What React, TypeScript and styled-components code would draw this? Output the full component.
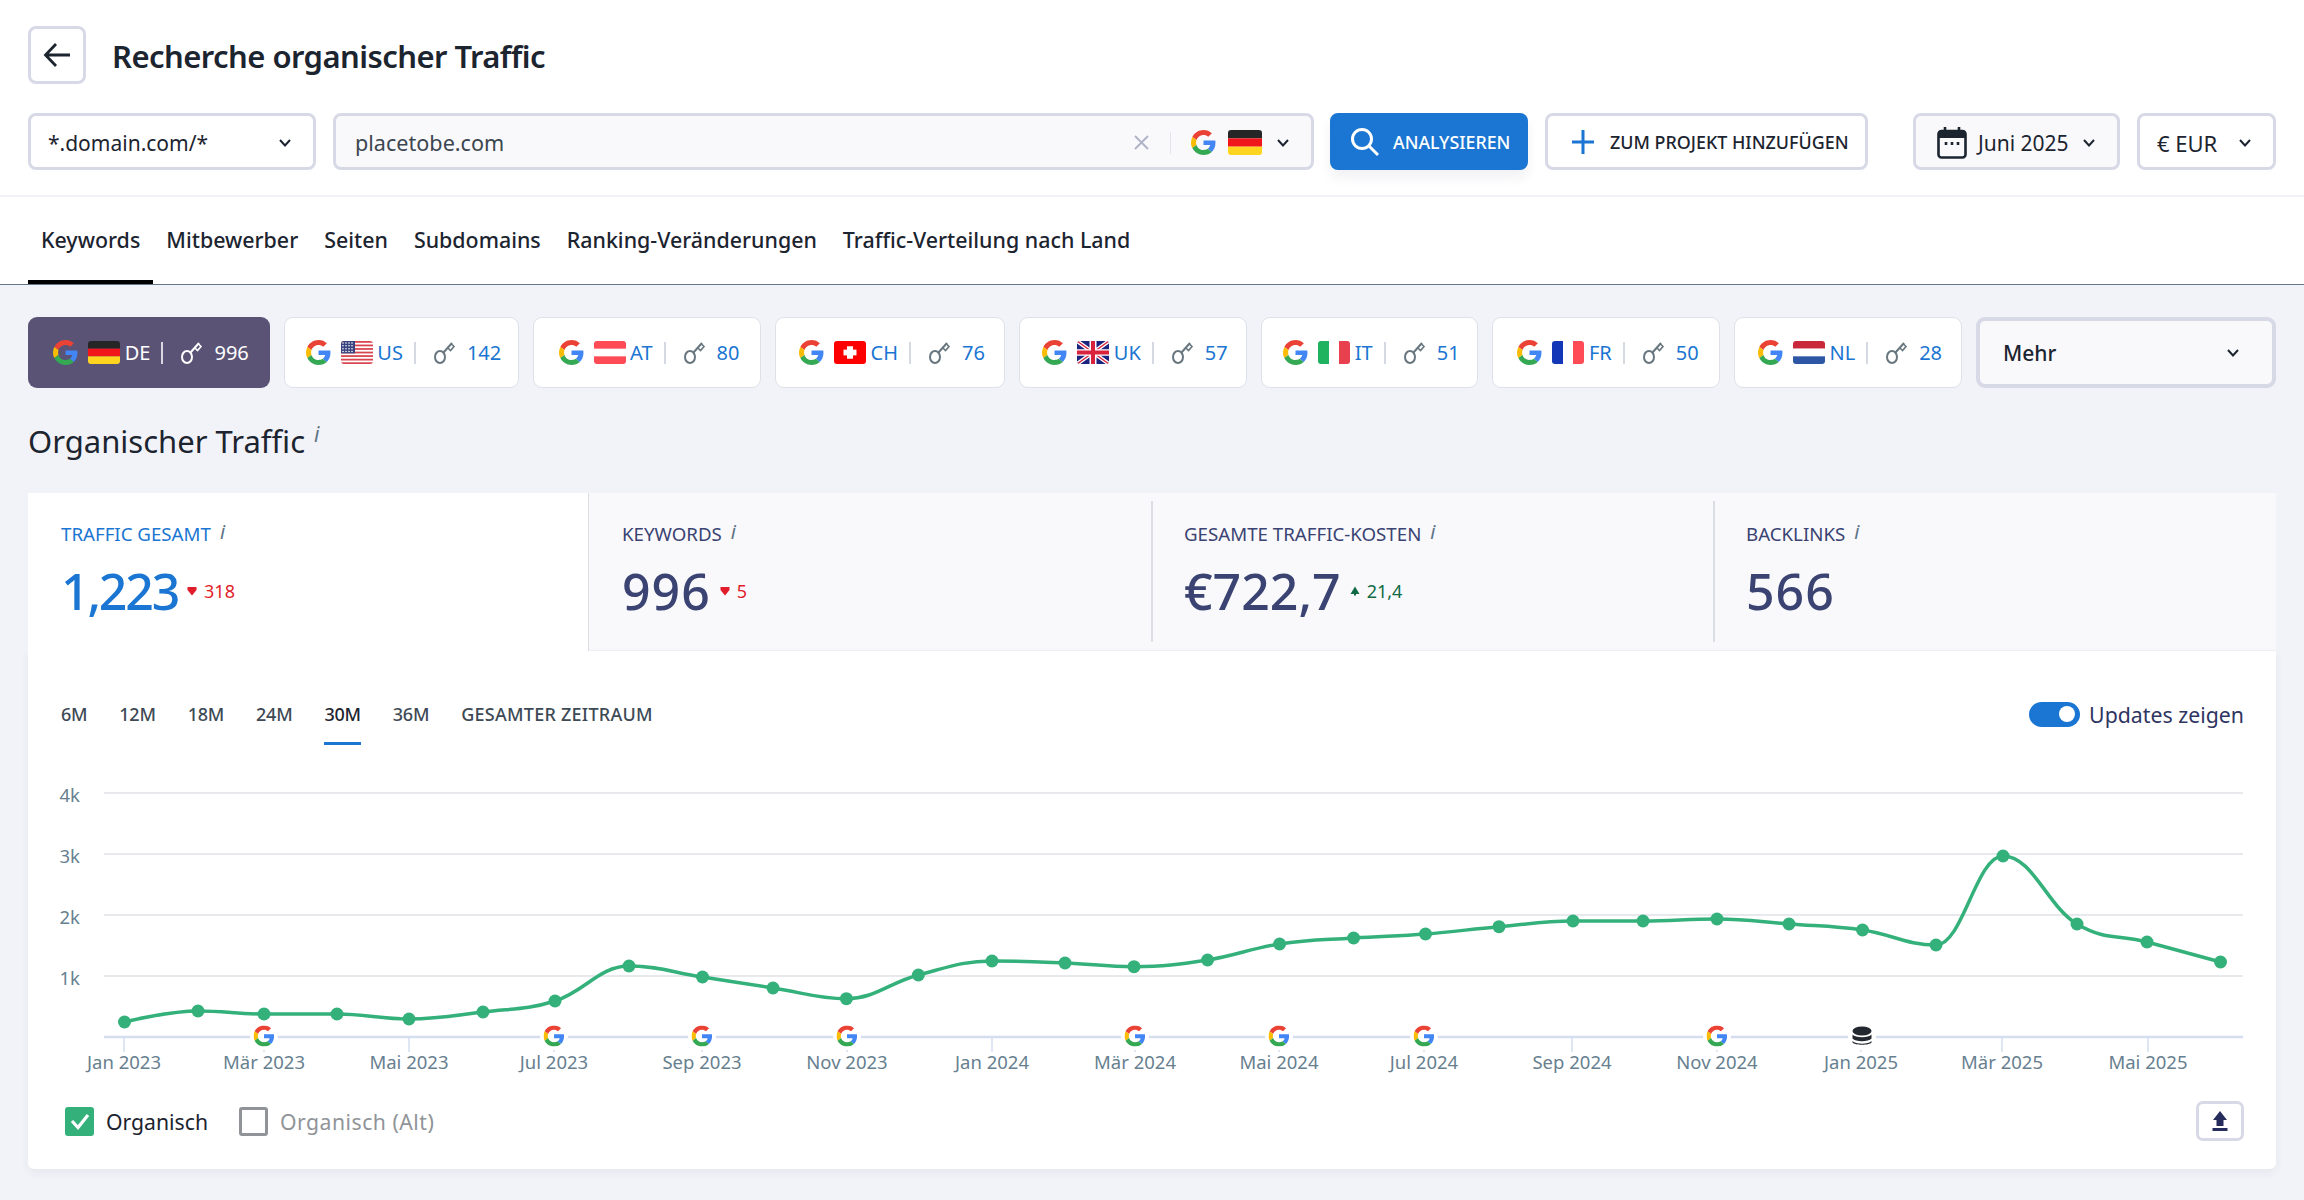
import React from "react";
import styled, { createGlobalStyle } from "styled-components";

const blue = "#1a76d2";
const ink = "#1c2430";
const navy = "#3a4372";
const green = "#34b17b";
const line = "#d8d9e6";
const font = `"Noto Sans", "Liberation Sans", sans-serif`;

const GlobalStyle = createGlobalStyle`
  html, body {
    margin: 0;
    padding: 0;
    background: #f2f3f8;
    font-family: ${font};
    color: ${ink};
  }
  * { box-sizing: border-box; }
`;

const Page = styled.div`
  width: 2304px;
  height: 1200px;
  overflow: hidden;
`;

const Header = styled.header`
  background: #fff;
  height: 285px;
  border-bottom: 1px solid #65778a;
`;

const TopArea = styled.div`
  height: 197px;
  padding: 26px 28px 0;
  border-bottom: 2px solid #f1f2f6;
`;

const TitleRow = styled.div`
  display: flex;
  align-items: center;
  gap: 26px;
  height: 58px;
`;

const BackButton = styled.button`
  width: 58px;
  height: 58px;
  padding: 0;
  display: flex;
  align-items: center;
  justify-content: center;
  background: #fff;
  border: 3px solid ${line};
  border-radius: 8px;
`;

const Title = styled.h1`
  margin: 0;
  padding-top: 2px;
  font-size: 31px;
  font-weight: 600;
  letter-spacing: -0.55px;
`;

const Controls = styled.div`
  display: flex;
  margin-top: 29px;
  height: 57px;
`;

const Select = styled.div<{ $w: number; $ml?: number; $tinted?: boolean; $pl?: number; $fs?: number }>`
  width: ${(p) => p.$w}px;
  margin-left: ${(p) => p.$ml ?? 0}px;
  padding: 2px 21px 0 ${(p) => p.$pl ?? 17}px;
  display: flex;
  align-items: center;
  justify-content: space-between;
  background: ${(p) => (p.$tinted ? "#f9f9fc" : "#fff")};
  border: 3px solid ${line};
  border-radius: 8px;
  font-size: ${(p) => p.$fs ?? 21}px;
`;

const SearchBox = styled.div`
  width: 981px;
  margin-left: 17px;
  padding: 2px 21px 0 19px;
  display: flex;
  align-items: center;
  background: #f9f9fc;
  border: 3px solid ${line};
  border-radius: 8px;
  font-size: 21.6px;
  color: #3c4650;
`;

const SearchText = styled.span`
  flex: 1;
`;

const InputSep = styled.span`
  width: 1px;
  height: 22px;
  margin: 0 20px 0 21px;
  background: #e2e4ec;
`;

const InputChevron = styled.span`
  margin-left: 14px;
  display: flex;
`;

const Analyze = styled.button`
  width: 198px;
  margin-left: 16px;
  padding: 0 0 0 20px;
  display: flex;
  align-items: center;
  gap: 13px;
  border: none;
  border-radius: 8px;
  background: ${blue};
  color: #fff;
  font-family: ${font};
  font-size: 17.8px;
  font-weight: 500;
  box-shadow: 0 8px 12px rgba(30, 40, 80, 0.06);
`;

const AddProject = styled.button`
  width: 323px;
  margin-left: 17px;
  padding: 0 0 0 24px;
  display: flex;
  align-items: center;
  gap: 16px;
  background: #fff;
  border: 3px solid ${line};
  border-radius: 8px;
  color: ${ink};
  font-family: ${font};
  font-size: 17.9px;
  font-weight: 500;
`;

const DateLabel = styled.span`
  display: flex;
  align-items: center;
  gap: 11px;
`;

const Tabs = styled.nav`
  display: flex;
  height: 87px;
  padding-left: 28px;
`;

const Tab = styled.div<{ $active?: boolean }>`
  padding: 2px 13px 0;
  display: flex;
  align-items: center;
  font-size: 21.4px;
  font-weight: 500;
  border-bottom: 4px solid ${(p) => (p.$active ? "#000" : "transparent")};
`;

const Content = styled.main`
  padding: 32px 28px 0;
`;

const ChipRow = styled.div`
  display: flex;
  gap: 14px;
  height: 71px;
`;

const Chip = styled.div<{ $w: number; $active?: boolean }>`
  width: ${(p) => p.$w}px;
  padding-left: 4px;
  display: flex;
  align-items: center;
  justify-content: center;
  border-radius: 9px;
  font-size: 20px;
  color: ${(p) => (p.$active ? "#fff" : blue)};
  background: ${(p) => (p.$active ? "#5a5376" : "#fff")};
  border: ${(p) => (p.$active ? "none" : "1.5px solid #dfe1ea")};
`;

const ChipCode = styled.span`
  margin-left: 4.5px;
`;

const ChipSep = styled.span<{ $active?: boolean }>`
  width: 2px;
  height: 22px;
  margin: 0 17px 0 11px;
  background: ${(p) => (p.$active ? "#d9d7e2" : "#d5d9e2")};
`;

const ChipCount = styled.span`
  margin-left: 11px;
`;

const MoreSelect = styled.div`
  width: 300px;
  padding: 0 32px 0 23px;
  display: flex;
  align-items: center;
  justify-content: space-between;
  background: #f9f9fc;
  border: 4px solid ${line};
  border-radius: 9px;
  font-size: 21px;
  font-weight: 500;
`;

const SectionTitle = styled.h2`
  margin: 0;
  height: 105px;
  padding-top: 30px;
  font-size: 31px;
  line-height: 46px;
  font-weight: 400;
`;

const Info = styled.sup`
  margin-left: 9px;
  font-size: 21px;
  line-height: 0;
  font-style: italic;
  font-weight: 400;
  color: #5d7484;
`;

const MetricInfo = styled.span`
  margin-left: 9px;
  font-size: 20px;
  font-style: italic;
  vertical-align: 2px;
  color: #5d7484;
`;

const Metrics = styled.section`
  display: grid;
  grid-template-columns: 561px 562px 562px 1fr;
  height: 158px;
  background: #f9f9fc;
`;

const Metric = styled.div<{ $active?: boolean }>`
  position: relative;
  padding: 24px 0 0 33px;
  background: ${(p) => (p.$active ? "#fff" : "transparent")};
  border-right: ${(p) => (p.$active ? "1.5px solid #dcdee6" : "none")};
  border-bottom: ${(p) => (p.$active ? "none" : "1.5px solid #eceef3")};
`;

const MetricRule = styled.span`
  position: absolute;
  left: 0;
  top: 8px;
  bottom: 8px;
  width: 1.5px;
  background: #dcdee6;
`;

const MetricLabel = styled.div<{ $active?: boolean }>`
  font-size: 18.7px;
  line-height: 30px;
  color: ${(p) => (p.$active ? blue : navy)};
`;

const MetricValueRow = styled.div`
  display: flex;
  align-items: center;
  margin-top: 12px;
`;

const MetricValue = styled.span<{ $active?: boolean; $tight?: boolean }>`
  font-size: 50px;
  line-height: 60px;
  font-weight: 500;
  letter-spacing: ${(p) => (p.$active ? "-2.2px" : p.$tight ? "0" : "1px")};
  color: ${(p) => (p.$active ? blue : navy)};
`;

const Delta = styled.span<{ $up?: boolean }>`
  margin-left: 9px;
  display: flex;
  align-items: center;
  gap: 7px;
  font-size: 18px;
  color: ${(p) => (p.$up ? "#0f6b45" : "#e11d2b")};
`;

const ChartCard = styled.section`
  height: 518px;
  background: #fff;
  border-radius: 0 0 6px 6px;
  box-shadow: 0 4px 10px rgba(40, 50, 90, 0.06);
`;

const ChartTop = styled.div`
  height: 119px;
  padding: 0 32px 0 33px;
  display: flex;
  justify-content: space-between;
`;

const Periods = styled.div`
  display: flex;
  gap: 32px;
`;

const Period = styled.div<{ $active?: boolean; $wide?: boolean }>`
  height: 94px;
  padding-top: 49px;
  font-size: 18px;
  line-height: 28px;
  font-weight: 500;
  letter-spacing: ${(p) => (p.$wide ? "0.25px" : "-0.25px")};
  color: ${(p) => (p.$active ? ink : "#3d4a55")};
  border-bottom: 3px solid ${(p) => (p.$active ? blue : "transparent")};
`;

const ToggleWrap = styled.div`
  display: flex;
  align-items: center;
  gap: 9px;
  height: 126px;
  font-size: 21.3px;
  color: #2f3562;
`;

const ToggleTrack = styled.span`
  width: 51px;
  height: 25px;
  padding-right: 5px;
  display: flex;
  align-items: center;
  justify-content: flex-end;
  border-radius: 13px;
  background: ${blue};
`;

const ToggleKnob = styled.span`
  width: 16px;
  height: 16px;
  border-radius: 50%;
  background: #fff;
`;

const ChartSvg = styled.svg`
  display: block;
  width: 2248px;
  height: 310px;
`;

const AxisText = styled.text`
  font-family: ${font};
  font-size: 18.5px;
  fill: #67808f;
`;

const Legend = styled.div`
  height: 89px;
  padding: 21px 32px 0 37px;
  display: flex;
  justify-content: space-between;
`;

const LegendItems = styled.div`
  display: flex;
  align-items: center;
  height: 40px;
`;

const LegendItem = styled.div<{ $off?: boolean }>`
  display: flex;
  align-items: center;
  gap: 12px;
  margin-right: 31px;
  font-size: 21.2px;
  letter-spacing: ${(p) => (p.$off ? "0.5px" : "0")};
  color: ${(p) => (p.$off ? "#909498" : ink)};
`;

const CheckBox = styled.span<{ $on?: boolean }>`
  width: 29px;
  height: 29px;
  display: flex;
  align-items: center;
  justify-content: center;
  border-radius: 3px;
  background: ${(p) => (p.$on ? green : "#fff")};
  border: ${(p) => (p.$on ? "none" : "3px solid #909498")};
`;

const ExportButton = styled.button`
  width: 48px;
  height: 40px;
  padding: 0;
  display: flex;
  align-items: center;
  justify-content: center;
  background: #fff;
  border: 3px solid ${line};
  border-radius: 7px;
`;

const FlagSvg = styled.svg<{ $ml: number }>`
  display: block;
  margin-left: ${(p) => p.$ml}px;
  border-radius: 3px;
  flex: none;
`;

const Chevron = () => (
  <svg width="14" height="10" viewBox="0 0 14 10" fill="none">
    <path d="M2 2l5 5.5L12 2" stroke="#1c2430" strokeWidth="2" />
  </svg>
);

const googlePaths = (
  <>
    <path fill="#EA4335" d="M24 9.5c3.54 0 6.71 1.22 9.21 3.6l6.85-6.85C35.9 2.38 30.47 0 24 0 14.62 0 6.51 5.38 2.56 13.22l7.98 6.19C12.43 13.72 17.74 9.5 24 9.5z" />
    <path fill="#4285F4" d="M46.98 24.55c0-1.57-.15-3.09-.38-4.55H24v9.02h12.94c-.58 2.96-2.26 5.48-4.78 7.18l7.73 6c4.51-4.18 7.09-10.36 7.09-17.65z" />
    <path fill="#FBBC05" d="M10.53 28.59c-.48-1.45-.76-2.99-.76-4.59s.27-3.14.76-4.59l-7.98-6.19C.92 16.46 0 20.12 0 24c0 3.88.92 7.54 2.56 10.78l7.97-6.19z" />
    <path fill="#34A853" d="M24 48c6.48 0 11.93-2.13 15.89-5.81l-7.73-6c-2.15 1.45-4.92 2.3-8.16 2.3-6.26 0-11.57-4.22-13.47-9.91l-7.98 6.19C6.51 42.62 14.62 48 24 48z" />
  </>
);

const GoogleG = () => (
  <svg width="25" height="25" viewBox="0 0 48 48" style={{ flex: "none" }}>
    {googlePaths}
  </svg>
);

const KeyIcon = ({ color }: { color: string }) => (
  <svg width="23" height="25" viewBox="0 0 23 25" fill="none" stroke={color} strokeWidth="2">
    <ellipse cx="7" cy="17" rx="5" ry="6" />
    <path d="M10.5 12.5L19 3" />
    <path d="M15 8l2.5 2.5 3.5-4-2.5-2.5" strokeWidth="1.6" />
  </svg>
);

const Flag = ({ code, big }: { code: string; big?: boolean }) => {
  const body: Record<string, React.ReactNode> = {
    DE: (
      <>
        <rect width="32" height="8" fill="#262626" />
        <rect y="8" width="32" height="8" fill="#f0151a" />
        <rect y="16" width="32" height="8" fill="#ffd51f" />
      </>
    ),
    US: (
      <>
        <rect width="32" height="24" fill="#fff" />
        {[0, 1, 2, 3, 4, 5, 6].map((i) => (
          <rect key={i} y={i * 3.7} width="32" height="1.85" fill="#d9454f" />
        ))}
        <rect width="14" height="12.9" fill="#39437f" />
        {[2, 5, 8, 11].map((x) =>
          [2, 5, 8, 11].map((y) => <circle key={`${x}-${y}`} cx={x} cy={y} r="0.8" fill="#fff" />)
        )}
      </>
    ),
    AT: (
      <>
        <rect width="32" height="24" fill="#ff4b55" />
        <rect y="8" width="32" height="8" fill="#fff" />
      </>
    ),
    CH: (
      <>
        <rect width="32" height="24" fill="#ff0000" />
        <rect x="13" y="5.5" width="6" height="13" fill="#fff" />
        <rect x="9.5" y="9" width="13" height="6" fill="#fff" />
      </>
    ),
    UK: (
      <>
        <rect width="32" height="24" fill="#1a237e" />
        <path d="M0 0l32 24M32 0L0 24" stroke="#fff" strokeWidth="4" />
        <path d="M0 0l32 24M32 0L0 24" stroke="#d9223b" strokeWidth="1.4" />
        <path d="M16 0v24M0 12h32" stroke="#fff" strokeWidth="7" />
        <path d="M16 0v24M0 12h32" stroke="#d9223b" strokeWidth="4" />
      </>
    ),
    IT: (
      <>
        <rect width="11" height="24" fill="#1fb35f" />
        <rect x="11" width="10" height="24" fill="#fff" />
        <rect x="21" width="11" height="24" fill="#e8404f" />
      </>
    ),
    FR: (
      <>
        <rect width="11" height="24" fill="#1437b8" />
        <rect x="11" width="10" height="24" fill="#fff" />
        <rect x="21" width="11" height="24" fill="#ff4b55" />
      </>
    ),
    NL: (
      <>
        <rect width="32" height="8" fill="#c8283a" />
        <rect y="8" width="32" height="8" fill="#fff" />
        <rect y="16" width="32" height="8" fill="#2d57a4" />
      </>
    ),
  };
  return (
    <FlagSvg
      $ml={big ? 12 : 10}
      width={big ? 34 : 32}
      height={big ? 25 : 23}
      viewBox="0 0 32 24"
      preserveAspectRatio="none"
    >
      {body[code]}
    </FlagSvg>
  );
};

const chips = [
  { code: "DE", count: "996", w: 242, active: true },
  { code: "US", count: "142", w: 235 },
  { code: "AT", count: "80", w: 228 },
  { code: "CH", count: "76", w: 230 },
  { code: "UK", count: "57", w: 228 },
  { code: "IT", count: "51", w: 217 },
  { code: "FR", count: "50", w: 228 },
  { code: "NL", count: "28", w: 228 },
];

const metrics = [
  { label: "TRAFFIC GESAMT", value: "1,223", delta: "318", active: true },
  { label: "KEYWORDS", value: "996", delta: "5" },
  { label: "GESAMTE TRAFFIC-KOSTEN", value: "€722,7", delta: "21,4", up: true, tight: true },
  { label: "BACKLINKS", value: "566" },
];

// x / y of every monthly point, in page pixels
const points: [number, number][] = [
  [124.5, 1022], [198, 1011], [264, 1014], [337, 1014], [409, 1019], [483, 1012],
  [555, 1001], [629, 966], [702.5, 977], [773, 988], [846.4, 998.7], [918.4, 975],
  [992, 961], [1065, 963], [1134, 966.7], [1207.6, 960], [1279.6, 944], [1353.6, 938],
  [1425.5, 934], [1499, 926.7], [1573, 921], [1643, 921], [1717, 919], [1789, 924],
  [1862.5, 930], [1936, 945], [2003, 856], [2077, 924], [2147, 942], [2220.5, 962],
];

const ticks = [
  { x: 124, label: "Jan 2023" },
  { x: 264, label: "Mär 2023", marker: "g" },
  { x: 409, label: "Mai 2023" },
  { x: 554, label: "Jul 2023", marker: "g" },
  { x: 702, label: "Sep 2023", marker: "g" },
  { x: 847, label: "Nov 2023", marker: "g" },
  { x: 992, label: "Jan 2024" },
  { x: 1135, label: "Mär 2024", marker: "g" },
  { x: 1279, label: "Mai 2024", marker: "g" },
  { x: 1424, label: "Jul 2024", marker: "g" },
  { x: 1572, label: "Sep 2024" },
  { x: 1717, label: "Nov 2024", marker: "g" },
  { x: 1861, label: "Jan 2025", marker: "db" },
  { x: 2002, label: "Mär 2025" },
  { x: 2148, label: "Mai 2025" },
];

// same smoothing as a highcharts spline series
function splinePath(pts: [number, number][]) {
  const s = 1.5;
  const conts = pts.map(([x, y], i) => {
    if (i === 0 || i === pts.length - 1) return { lx: x, ly: y, rx: x, ry: y };
    const [px, py] = pts[i - 1];
    const [nx, ny] = pts[i + 1];
    const lx = (s * x + px) / (s + 1);
    let ly = (s * y + py) / (s + 1);
    const rx = (s * x + nx) / (s + 1);
    let ry = (s * y + ny) / (s + 1);
    const corr = ((ry - ly) * (rx - x)) / (rx - lx) + y - ry;
    ly += corr;
    ry += corr;
    if ((ly > py && ly > y) || (ly < py && ly < y)) {
      ly = ly > y ? Math.max(py, y) : Math.min(py, y);
      ry = 2 * y - ly;
    }
    if ((ry > ny && ry > y) || (ry < ny && ry < y)) {
      ry = ry > y ? Math.max(ny, y) : Math.min(ny, y);
      ly = 2 * y - ry;
    }
    return { lx, ly, rx, ry };
  });
  let d = `M${pts[0][0]} ${pts[0][1]}`;
  for (let i = 1; i < pts.length; i++) {
    d += ` C${conts[i - 1].rx} ${conts[i - 1].ry} ${conts[i].lx} ${conts[i].ly} ${pts[i][0]} ${pts[i][1]}`;
  }
  return d;
}

const TrafficChart = () => (
  <ChartSvg viewBox="28 770 2248 310">
    {[793, 854, 915, 976].map((y, i) => (
      <g key={y}>
        <line x1="104" x2="2243" y1={y} y2={y} stroke="#e8e9ec" strokeWidth="2" />
        <AxisText x="80" y={y + 9} textAnchor="end">
          {`${4 - i}k`}
        </AxisText>
      </g>
    ))}
    <line x1="104" x2="2243" y1="1037" y2="1037" stroke="#d5def0" strokeWidth="2.5" />
    {ticks.map((t) => (
      <g key={t.label}>
        <line x1={t.x} x2={t.x} y1="1037" y2="1052" stroke="#d5def0" strokeWidth="1.5" />
        <AxisText x={t.x} y="1069" textAnchor="middle">
          {t.label}
        </AxisText>
      </g>
    ))}
    <path d={splinePath(points)} fill="none" stroke={green} strokeWidth="3.5" />
    {points.map(([x, y]) => (
      <circle key={x} cx={x} cy={y} r="6.5" fill={green} />
    ))}
    {ticks
      .filter((t) => t.marker)
      .map((t) =>
        t.marker === "g" ? (
          <g key={t.label}>
            <circle cx={t.x} cy="1036" r="14" fill="#fff" />
            <svg x={t.x - 10.5} y={1025.5} width="21" height="21" viewBox="0 0 48 48">
              {googlePaths}
            </svg>
          </g>
        ) : (
          <g key={t.label}>
            <circle cx={t.x + 1} cy="1036" r="14" fill="#fff" />
            <ellipse cx={t.x + 1} cy="1031" rx="9.5" ry="4.5" fill="#23272f" />
            <path d={`M${t.x - 8.5} 1034.5c3 3.5 16 3.5 19 0v4c-3 3.5-16 3.5-19 0z`} fill="#23272f" />
            <path d={`M${t.x - 8.5} 1041c3 3.5 16 3.5 19 0v1.5c-2 3-17 3-19 0z`} fill="#23272f" />
          </g>
        )
      )}
  </ChartSvg>
);

export default function App() {
  return (
    <Page>
      <GlobalStyle />
      <Header>
        <TopArea>
          <TitleRow>
            <BackButton>
              <svg width="28" height="26" viewBox="0 0 28 26" fill="none" stroke="#1c2430" strokeWidth="2.8">
                <path d="M27 13H3M13 2L2.5 13 13 24" />
              </svg>
            </BackButton>
            <Title>Recherche organischer Traffic</Title>
          </TitleRow>
          <Controls>
            <Select $w={288}>
              *.domain.com/*
              <Chevron />
            </Select>
            <SearchBox>
              <SearchText>placetobe.com</SearchText>
              <svg width="15" height="15" viewBox="0 0 15 15" stroke="#afb3c6" strokeWidth="1.8">
                <path d="M1 1l13 13M14 1L1 14" />
              </svg>
              <InputSep />
              <GoogleG />
              <Flag code="DE" big />
              <InputChevron>
                <Chevron />
              </InputChevron>
            </SearchBox>
            <Analyze>
              <svg width="30" height="30" viewBox="0 0 30 30" fill="none" stroke="#fff" strokeWidth="3">
                <circle cx="12" cy="12" r="9.5" />
                <path d="M19 19l9 9" />
              </svg>
              ANALYSIEREN
            </Analyze>
            <AddProject>
              <svg width="22" height="24" viewBox="0 0 22 24" stroke={blue} strokeWidth="3">
                <path d="M11 0v24M0 12h22" />
              </svg>
              ZUM PROJEKT HINZUFÜGEN
            </AddProject>
            <Select $w={207} $ml={45} $tinted $pl={21}>
              <DateLabel>
                <svg width="30" height="32" viewBox="0 0 30 32" fill="none">
                  <rect x="1.5" y="4" width="27" height="26.5" rx="3" stroke="#1c2430" strokeWidth="2.6" />
                  <rect x="1.5" y="4" width="27" height="7" fill="#1c2430" />
                  <path d="M8 0v5M22 0v5" stroke="#1c2430" strokeWidth="2.6" />
                  <path d="M9 15v3M15 15v3M21 15v3" stroke="#1c2430" strokeWidth="2.6" />
                </svg>
                Juni 2025
              </DateLabel>
              <Chevron />
            </Select>
            <Select $w={139} $ml={17} $pl={17} $fs={22}>
              € EUR
              <Chevron />
            </Select>
          </Controls>
        </TopArea>
        <Tabs>
          <Tab $active>Keywords</Tab>
          <Tab>Mitbewerber</Tab>
          <Tab>Seiten</Tab>
          <Tab>Subdomains</Tab>
          <Tab>Ranking-Veränderungen</Tab>
          <Tab>Traffic-Verteilung nach Land</Tab>
        </Tabs>
      </Header>
      <Content>
        <ChipRow>
          {chips.map((c) => (
            <Chip key={c.code} $w={c.w} $active={c.active}>
              <GoogleG />
              <Flag code={c.code} />
              <ChipCode>{c.code}</ChipCode>
              <ChipSep $active={c.active} />
              <KeyIcon color={c.active ? "#fff" : "#67767f"} />
              <ChipCount>{c.count}</ChipCount>
            </Chip>
          ))}
          <MoreSelect>
            Mehr
            <Chevron />
          </MoreSelect>
        </ChipRow>
        <SectionTitle>
          Organischer Traffic
          <Info>i</Info>
        </SectionTitle>
        <Metrics>
          {metrics.map((m, i) => (
            <Metric key={m.label} $active={m.active}>
              {i > 1 && <MetricRule />}
              <MetricLabel $active={m.active}>
                {m.label}
                <MetricInfo>i</MetricInfo>
              </MetricLabel>
              <MetricValueRow>
                <MetricValue $active={m.active} $tight={m.tight}>
                  {m.value}
                </MetricValue>
                {m.delta && (
                  <Delta $up={m.up}>
                    <svg width="10" height="10" viewBox="0 0 10 10" fill={m.up ? "#0f6b45" : "#e11d2b"}>
                      {m.up ? (
                        <path d="M5 0.5L9.5 8H6v1.5H4V8H0.5z" />
                      ) : (
                        <path d="M0.5 1h9v3L5 9.5 0.5 4z" />
                      )}
                    </svg>
                    {m.delta}
                  </Delta>
                )}
              </MetricValueRow>
            </Metric>
          ))}
        </Metrics>
        <ChartCard>
          <ChartTop>
            <Periods>
              {["6M", "12M", "18M", "24M", "30M", "36M", "GESAMTER ZEITRAUM"].map((p) => (
                <Period key={p} $active={p === "30M"} $wide={p.length > 3}>
                  {p}
                </Period>
              ))}
            </Periods>
            <ToggleWrap>
              <ToggleTrack>
                <ToggleKnob />
              </ToggleTrack>
              Updates zeigen
            </ToggleWrap>
          </ChartTop>
          <TrafficChart />
          <Legend>
            <LegendItems>
              <LegendItem>
                <CheckBox $on>
                  <svg width="20" height="17" viewBox="0 0 20 17" fill="none" stroke="#fff" strokeWidth="3.2">
                    <path d="M2 8l6 6.5L18 2" />
                  </svg>
                </CheckBox>
                Organisch
              </LegendItem>
              <LegendItem $off>
                <CheckBox />
                Organisch (Alt)
              </LegendItem>
            </LegendItems>
            <ExportButton>
              <svg width="16" height="20" viewBox="0 0 16 20" fill="#262d5c">
                <path d="M8 0l7 9h-3.5v6h-7V9H1z" />
                <rect x="0.5" y="17" width="15" height="3" />
              </svg>
            </ExportButton>
          </Legend>
        </ChartCard>
      </Content>
    </Page>
  );
}
